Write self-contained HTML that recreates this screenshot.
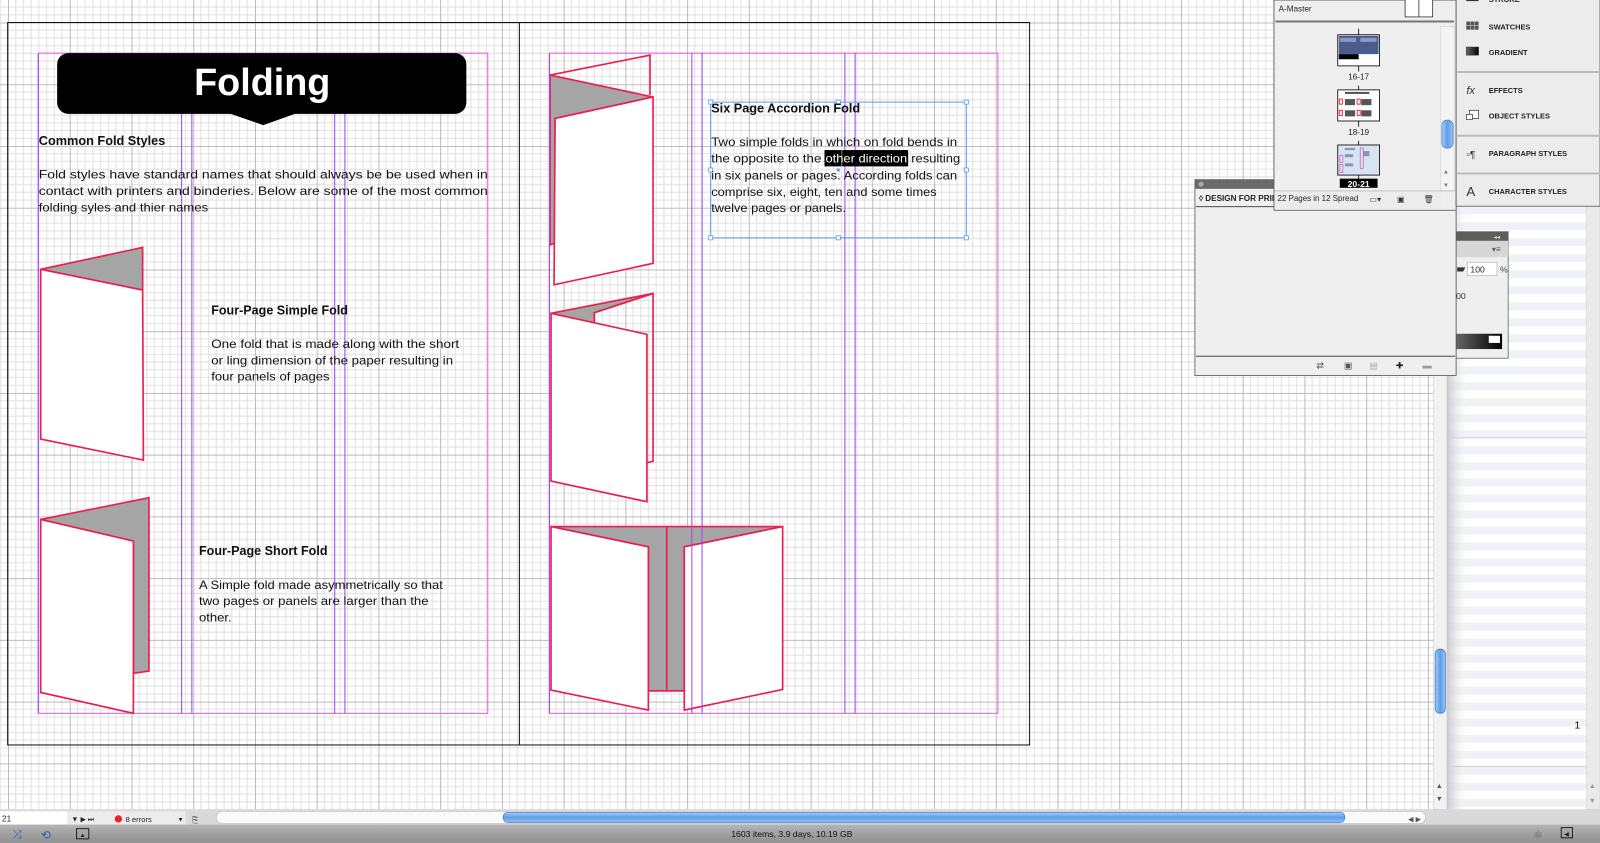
<!DOCTYPE html>
<html><head><meta charset="utf-8"><style>
html,body{margin:0;padding:0;width:1600px;height:843px;overflow:hidden;background:#fff}
svg{display:block}
text{font-family:"Liberation Sans",sans-serif}
</style></head><body>
<svg width="1600" height="843" viewBox="0 0 1568 826" xmlns="http://www.w3.org/2000/svg">
<defs>
<pattern id="g" x="7.84" y="22" width="60.5" height="60.5" patternUnits="userSpaceOnUse">
<g stroke="#e3e3e3" stroke-width="1.1">
<path d="M7.56 0V60.5M15.12 0V60.5M22.69 0V60.5M30.25 0V60.5M37.81 0V60.5M45.37 0V60.5M52.94 0V60.5"/>
<path d="M0 7.56H60.5M0 15.12H60.5M0 22.69H60.5M0 30.25H60.5M0 37.81H60.5M0 45.37H60.5M0 52.94H60.5"/>
</g>
<path d="M0.5 0V60.5M0 0.5H60.5" stroke="#bcbcbc" stroke-width="1"/>
</pattern>
<pattern id="st" x="0" y="202" width="20" height="15.7" patternUnits="userSpaceOnUse">
<rect width="20" height="7.85" fill="#eef2f7"/><rect y="7.85" width="20" height="7.85" fill="#fff"/>
</pattern>
<linearGradient id="sh" x1="0" x2="1"><stop offset="0" stop-color="#c8c8cc"/><stop offset="1" stop-color="#fff" stop-opacity="0"/></linearGradient>
<linearGradient id="bl" x1="0" y1="0" x2="0" y2="1"><stop offset="0" stop-color="#a9cdf4"/><stop offset="0.5" stop-color="#5e9ce8"/><stop offset="1" stop-color="#9cc4f0"/></linearGradient>
<linearGradient id="blh" x1="0" y1="0" x2="1" y2="0"><stop offset="0" stop-color="#a9cdf4"/><stop offset="0.5" stop-color="#5e9ce8"/><stop offset="1" stop-color="#9cc4f0"/></linearGradient>
<linearGradient id="bar" x1="0" y1="0" x2="0" y2="1"><stop offset="0" stop-color="#b5b5b5"/><stop offset="1" stop-color="#8e8e8e"/></linearGradient>
<linearGradient id="gr" x1="0" x2="1"><stop offset="0" stop-color="#666"/><stop offset="1" stop-color="#000"/></linearGradient>
</defs>

<rect x="0" y="0" width="1405" height="793" fill="#fff"/>
<rect x="0" y="0" width="1405" height="793" fill="url(#g)"/>

<rect x="7.5" y="22" width="1001.5" height="708" fill="none" stroke="#111" stroke-width="1"/>
<line x1="509" y1="22" x2="509" y2="730" stroke="#111" stroke-width="1"/>

<g fill="none" stroke-width="1">
<rect x="37.5" y="52" width="440.5" height="647" stroke="#e65be6"/>
<rect x="538.5" y="52" width="439.5" height="647" stroke="#e65be6"/>
<path d="M178 52V699M188 52V699M328 52V699M338 52V699M678 52V699M688 52V699M828 52V699M838 52V699" stroke="#9b45f5"/>
<path d="M37.5 52V699M538.5 52V699" stroke="#9b45f5"/>
</g>

<rect x="56" y="52" width="401" height="59.5" rx="11" fill="#000"/>
<polygon points="222,110 293,110 258,122.5" fill="#000"/>
<text x="257" y="93" text-anchor="middle" fill="#fff" font-size="37" font-weight="bold">Folding</text>

<g fill="#111" font-size="12" lengthAdjust="spacingAndGlyphs">
<text x="38" y="142" font-weight="bold" font-size="12.5" textLength="124" lengthAdjust="spacingAndGlyphs">Common Fold Styles</text>
<text x="38" y="175" textLength="440" lengthAdjust="spacingAndGlyphs">Fold styles have standard names that should always be be used when in</text>
<text x="38" y="191" textLength="440" lengthAdjust="spacingAndGlyphs">contact with printers and binderies. Below are some of the most common</text>
<text x="38" y="207" textLength="166" lengthAdjust="spacingAndGlyphs">folding syles and thier names</text>
<text x="207" y="308" font-weight="bold" font-size="12.5" textLength="134" lengthAdjust="spacingAndGlyphs">Four-Page Simple Fold</text>
<text x="207" y="341" textLength="243" lengthAdjust="spacingAndGlyphs">One fold that is made along with the short</text>
<text x="207" y="357" textLength="237" lengthAdjust="spacingAndGlyphs">or ling dimension of the paper resulting in</text>
<text x="207" y="373" textLength="116" lengthAdjust="spacingAndGlyphs">four panels of pages</text>
<text x="195" y="544" font-weight="bold" font-size="12.5" textLength="126" lengthAdjust="spacingAndGlyphs">Four-Page Short Fold</text>
<text x="195" y="577" textLength="239" lengthAdjust="spacingAndGlyphs">A Simple fold made asymmetrically so that</text>
<text x="195" y="593" textLength="225" lengthAdjust="spacingAndGlyphs">two pages or panels are larger than the</text>
<text x="195" y="609" textLength="32" lengthAdjust="spacingAndGlyphs">other.</text>
</g>

<g stroke="#ea1d4c" stroke-width="1.6" stroke-linejoin="miter">
<polygon points="39.9,263.9 139.8,242.4 139.8,284.2" fill="#a5a5a5"/>
<polygon points="39.9,263.9 139.8,284.2 140.5,450.8 39.9,430.2" fill="#fff"/>
<polygon points="39.9,509 146,487.7 146,657.6 130.7,659.8 130.7,530.2" fill="#a5a5a5"/>
<polygon points="39.9,509 130.7,530.2 130.7,699 39.9,678.5" fill="#fff"/>
<polygon points="539,73.5 640,95 544,116 544,238 539,240" fill="#a5a5a5"/>
<polyline points="539,73.5 637,54 637,93" fill="none"/>
<polygon points="544,116 640,95 640,258 543,279" fill="#fff"/>
<polygon points="540,307 640,287.5 582.4,306.4 582.4,316.9" fill="#a5a5a5"/>
<polyline points="582.4,306.4 640,287.5 640,452 634,453.4" fill="none"/>
<polygon points="540,307 634,327.6 634,491.6 540,471.4" fill="#fff"/>
<line x1="582.4" y1="306.4" x2="582.4" y2="316.9"/>
<polygon points="540,516 767,516 670.6,535.8 670.6,676.9 635.4,676.9 635.4,535.8" fill="#a5a5a5"/>
<polygon points="540,516 635.4,535.8 635.4,695.8 540,676.2" fill="#fff"/>
<polygon points="670.6,535.8 767,516 767,675.6 670.6,695.8" fill="#fff"/>
<line x1="653.4" y1="516" x2="653.4" y2="676.9"/>
<line x1="635.4" y1="676.9" x2="670.6" y2="676.9"/>
</g>
<path d="M538.5 52V699M678 516V699M688 516V699" stroke="#9b45f5" stroke-width="1"/>

<rect x="696.5" y="100" width="250.5" height="133" fill="none" stroke="#5d9bf0" stroke-width="1"/>
<g fill="#fff" stroke="#5d9bf0" stroke-width="0.8">
<rect x="694.5" y="98" width="4" height="4"/><rect x="819.5" y="98" width="4" height="4"/><rect x="945" y="98" width="4" height="4"/>
<rect x="694.5" y="164.5" width="4" height="4"/><rect x="945" y="164.5" width="4" height="4"/>
<rect x="694.5" y="231" width="4" height="4"/><rect x="819.5" y="231" width="4" height="4"/><rect x="945" y="231" width="4" height="4"/>
</g>
<rect x="820" y="165" width="3" height="3" fill="#5d9bf0"/>
<rect x="808" y="147" width="82" height="16" fill="#000"/>
<line x1="825" y1="147" x2="825" y2="163" stroke="#7cc23a" stroke-width="0.8"/>
<g fill="#111" font-size="12">
<text x="697" y="110" font-weight="bold" font-size="12.5" textLength="146" lengthAdjust="spacingAndGlyphs">Six Page Accordion Fold</text>
<text x="697" y="143" textLength="241" lengthAdjust="spacingAndGlyphs">Two simple folds in which on fold bends in</text>
<text x="697" y="159.4" textLength="108" lengthAdjust="spacingAndGlyphs">the opposite to the</text>
<text x="809" y="159.4" fill="#fff" textLength="80" lengthAdjust="spacingAndGlyphs">other direction</text>
<text x="893" y="159.4" textLength="48" lengthAdjust="spacingAndGlyphs">resulting</text>
<text x="697" y="175.7" textLength="241" lengthAdjust="spacingAndGlyphs">in six panels or pages. According folds can</text>
<text x="697" y="192" textLength="221" lengthAdjust="spacingAndGlyphs">comprise six, eight, ten and some times</text>
<text x="697" y="207.5" textLength="132" lengthAdjust="spacingAndGlyphs">twelve pages or panels.</text>
</g>

<rect x="1418" y="202" width="150" height="591" fill="url(#st)"/>
<rect x="1418" y="202" width="22" height="591" fill="url(#sh)"/>
<line x1="1418" y1="429" x2="1555" y2="429" stroke="#d0d0d0"/>
<line x1="1418" y1="751" x2="1555" y2="751" stroke="#d0d0d0"/>
<text x="1543" y="714" font-size="10" fill="#111">1</text>
<rect x="1555" y="202" width="13" height="591" fill="#eaeaea" stroke="#c8c8c8" stroke-width="0.5"/>
<text x="1557" y="772" font-size="7" fill="#999">▲</text><text x="1557" y="787" font-size="7" fill="#999">▼</text>

<rect x="1405" y="0" width="13" height="793" fill="#f2f2f2" stroke="#c9c9c9" stroke-width="0.6"/>
<rect x="1406.5" y="636" width="10" height="63" rx="5" fill="url(#blh)" stroke="#3f7fd8" stroke-width="0.8"/>
<text x="1407" y="772" font-size="7" fill="#555">▲</text><text x="1407" y="785" font-size="7" fill="#555">▼</text>

<rect x="1427" y="227" width="51" height="124" fill="#efefef" stroke="#666" stroke-width="0.8"/>
<rect x="1427" y="227" width="51" height="9" fill="#5e5e5e"/>
<text x="1464" y="234" font-size="6" fill="#ddd">◂◂</text>
<rect x="1427" y="236" width="51" height="16" fill="#d6d6d6"/>
<text x="1462" y="247" font-size="8" fill="#555">▾≡</text>
<rect x="1438" y="257" width="29" height="13" fill="#fff" stroke="#aaa" stroke-width="0.6"/>
<text x="1441" y="267" font-size="8.5" fill="#222">100</text>
<text x="1470" y="267" font-size="8.5" fill="#444">%</text>
<path d="M1428 262h8l-2 4h-6z" fill="#333"/>
<text x="1427" y="293" font-size="8.5" fill="#333">00</text>
<rect x="1427" y="327" width="45" height="15" fill="url(#gr)"/>
<rect x="1459" y="329" width="11" height="7" fill="#fff"/>

<rect x="1171" y="176" width="256" height="192" fill="#efefef" stroke="#555" stroke-width="0.8"/>
<rect x="1171" y="176" width="256" height="9" fill="#6a6a6a"/>
<circle cx="1177" cy="180.5" r="2.5" fill="#aaa"/>
<text x="1175" y="197" font-size="8" font-weight="bold" fill="#222">◊ DESIGN FOR PRIN</text>
<line x1="1172" y1="202.5" x2="1426" y2="202.5" stroke="#333" stroke-width="0.8"/>
<line x1="1172" y1="349" x2="1426" y2="349" stroke="#333" stroke-width="0.8"/>
<g font-size="9" fill="#555"><text x="1290" y="361">⇄</text><text x="1317" y="361">▣</text><text x="1342" y="361" fill="#aaa">▤</text><text x="1368" y="361" fill="#222">✚</text><text x="1394" y="361" fill="#999">▬</text></g>

<rect x="1248.5" y="0" width="178.5" height="206" fill="#efefef" stroke="#555" stroke-width="0.8"/>
<text x="1253" y="11" font-size="8" fill="#222">A-Master</text>
<rect x="1377" y="-1" width="27" height="17.5" fill="#fff" stroke="#333" stroke-width="0.8"/>
<line x1="1390.5" y1="0" x2="1390.5" y2="16" stroke="#333" stroke-width="0.8"/>
<rect x="1250" y="20" width="175" height="2" fill="#777"/>
<rect x="1412" y="26" width="13" height="161" fill="#f4f4f4" stroke="#ccc" stroke-width="0.5"/>
<rect x="1413" y="117.6" width="11" height="27.5" rx="5" fill="url(#blh)" stroke="#3f7fd8" stroke-width="0.7"/>
<text x="1414" y="170" font-size="6" fill="#777">▲</text><text x="1414" y="183" font-size="6" fill="#777">▼</text>
<line x1="1331.5" y1="28" x2="1331.5" y2="70" stroke="#000" stroke-width="0.8"/>
<rect x="1311" y="34" width="41" height="30.5" fill="#fff" stroke="#000" stroke-width="0.8"/>
<rect x="1312" y="35" width="39" height="18" fill="#4a5b8c"/>
<rect x="1312" y="53" width="19.5" height="5" fill="#000"/>
<rect x="1313" y="37" width="16" height="4" fill="#8b9ac4"/><rect x="1333" y="37" width="16" height="4" fill="#8b9ac4"/>
<text x="1331.5" y="78" text-anchor="middle" font-size="8" fill="#222">16-17</text>
<line x1="1331.5" y1="84" x2="1331.5" y2="124" stroke="#000" stroke-width="0.8"/>
<rect x="1311" y="88" width="41" height="30.5" fill="#fff" stroke="#000" stroke-width="0.8"/>
<g fill="#555"><rect x="1318" y="97" width="10" height="6"/><rect x="1334" y="97" width="10" height="6"/><rect x="1318" y="108" width="10" height="6"/><rect x="1334" y="108" width="10" height="6"/><rect x="1318" y="90" width="24" height="2"/></g>
<g fill="none" stroke="#e00" stroke-width="0.8"><rect x="1312.5" y="97" width="3" height="5"/><rect x="1312.5" y="108" width="3" height="5"/><rect x="1330" y="97" width="3" height="5"/><rect x="1330" y="108" width="3" height="5"/></g>
<text x="1331.5" y="132" text-anchor="middle" font-size="8" fill="#222">18-19</text>
<line x1="1331.5" y1="138" x2="1331.5" y2="178" stroke="#000" stroke-width="0.8"/>
<rect x="1311" y="142" width="41" height="29.5" fill="#d5e3f5" stroke="#000" stroke-width="0.8"/>
<g fill="#8a96b0"><rect x="1318" y="145" width="10" height="2"/><rect x="1318" y="151" width="8" height="3"/><rect x="1318" y="160" width="8" height="3"/><rect x="1336" y="148" width="6" height="5"/></g>
<g fill="none" stroke="#d05aa0" stroke-width="0.7"><rect x="1313" y="152" width="3" height="7"/><rect x="1313" y="161" width="3" height="8"/><rect x="1333" y="145" width="3" height="20"/></g>
<rect x="1313" y="175" width="37" height="9" fill="#000"/>
<text x="1331.5" y="183" text-anchor="middle" font-size="8.5" font-weight="bold" fill="#fff">20-21</text>
<rect x="1249" y="187" width="163" height="17" fill="#ececec"/>
<line x1="1249" y1="187" x2="1427" y2="187" stroke="#aaa" stroke-width="0.6"/>
<text x="1252" y="197" font-size="7.8" fill="#222">22 Pages in 12 Spread</text>
<g font-size="8" fill="#333"><text x="1342" y="198">▭▾</text><text x="1369" y="198">▣</text><text x="1395" y="198">🗑</text></g>

<rect x="1427" y="-1" width="141" height="203" fill="#ececec" stroke="#555" stroke-width="0.8"/>
<line x1="1428" y1="70.5" x2="1568" y2="70.5" stroke="#bbb" stroke-width="2"/>
<line x1="1428" y1="133" x2="1568" y2="133" stroke="#bbb" stroke-width="2"/>
<line x1="1428" y1="170" x2="1568" y2="170" stroke="#bbb" stroke-width="2"/>
<g font-size="7.3" font-weight="bold" fill="#222">
<text x="1459" y="2">STROKE</text>
<text x="1459" y="29">SWATCHES</text>
<text x="1459" y="54">GRADIENT</text>
<text x="1459" y="91">EFFECTS</text>
<text x="1459" y="116">OBJECT STYLES</text>
<text x="1459" y="153">PARAGRAPH STYLES</text>
<text x="1459" y="190">CHARACTER STYLES</text>
</g>
<rect x="1437" y="-2" width="12" height="3" fill="#333"/>
<rect x="1437" y="21" width="12" height="8" fill="#555"/>
<path d="M1437 25H1449M1441 21V29M1445 21V29" stroke="#ccc" stroke-width="0.6"/>
<rect x="1437" y="46" width="12" height="8" fill="url(#gr)" stroke="#333" stroke-width="0.5"/>
<text x="1437" y="92" font-size="11" font-style="italic" font-family="Liberation Serif" fill="#333">fx</text>
<rect x="1440" y="108" width="9" height="8" fill="#fff" stroke="#333" stroke-width="0.7"/><rect x="1437" y="112" width="6" height="5" fill="#fff" stroke="#333" stroke-width="0.7"/>
<text x="1437" y="155" font-size="10" fill="#333">▫¶</text>
<text x="1437" y="192" font-size="13" fill="#333">A</text>

<rect x="0" y="793" width="1568" height="15" fill="#d9d9d9"/>
<rect x="0" y="795" width="66" height="13" fill="#fff"/>
<text x="2" y="805" font-size="8" fill="#222">21</text>
<rect x="66" y="795" width="116" height="13" fill="#ececec"/>
<text x="70" y="805" font-size="7" fill="#222">▼ ▶ ⏭</text>
<circle cx="116" cy="802.5" r="3.6" fill="#e22"/>
<text x="123" y="805.5" font-size="7.5" fill="#222">8 errors</text>
<text x="174" y="805" font-size="6" fill="#222">▼</text>
<text x="188" y="806" font-size="8" fill="#333">⎘</text>
<rect x="212" y="795" width="1185" height="12" rx="6" fill="#fafafa" stroke="#bbb" stroke-width="0.6"/>
<rect x="493" y="796" width="825" height="10" rx="5" fill="url(#bl)" stroke="#3f7fd8" stroke-width="0.7"/>
<text x="1380" y="805" font-size="7" fill="#555">◀ ▶</text>
<rect x="0" y="808" width="1568" height="18" fill="url(#bar)"/>
<text x="12" y="821" font-size="12" fill="#2a62c0">⤨</text>
<text x="40" y="822" font-size="12" fill="#2a62c0">⟲</text>
<rect x="75" y="812" width="12" height="10" fill="none" stroke="#222" stroke-width="1"/>
<text x="78" y="820" font-size="6" fill="#222">▲</text>
<text x="776" y="820" text-anchor="middle" font-size="8.5" fill="#111">1603 items, 3.9 days, 10.19 GB</text>
<text x="1502" y="822" font-size="12" fill="#666">⚛</text>
<rect x="1530" y="811" width="11" height="10" fill="none" stroke="#222"/>
<text x="1533" y="819" font-size="6" fill="#222">◀</text>
</svg>
</body></html>
